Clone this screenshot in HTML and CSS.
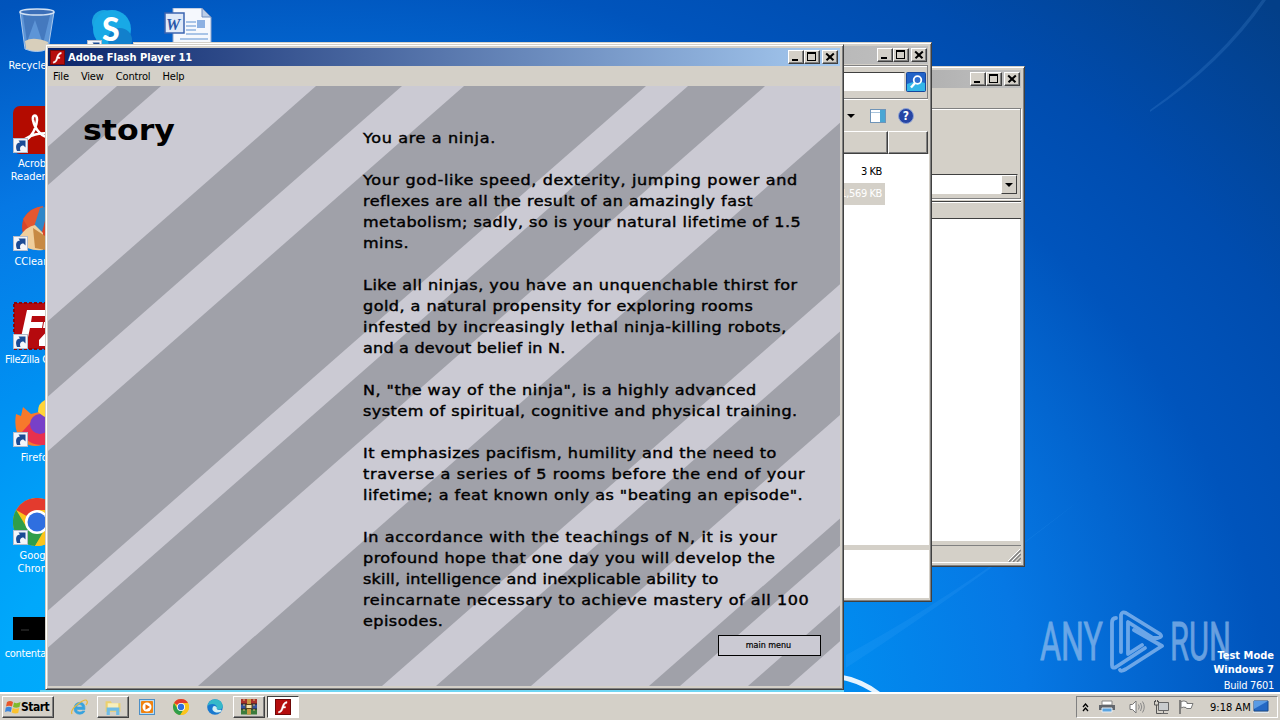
FILE: index.html
```html
<!DOCTYPE html>
<html lang="en">
<head>
    <meta charset="UTF-8">
    <meta name="viewport" content="width=device-width, initial-scale=1.0">
    <title>Desktop</title>
    <link rel="stylesheet" href="styles.css">
</head>
<body>
    <svg width="0" height="0" class="defs">
        <symbol id="shortcut" viewBox="0 0 15 15">
            <rect x=".5" y=".5" width="14" height="14" fill="#f4f6fa" stroke="#b4bccb"/>
            <path d="M4 13C2 8 3.500 4.500 7 4.500L5.500 2.500H12.500V9.500L10.500 7.500C7 7.500 6.500 10 7.500 13Z" fill="#1b4b94"/>
        </symbol>
        <symbol id="flash" viewBox="0 0 16 16">
            <rect x=".5" y=".5" width="15" height="15" fill="#b50d0d" stroke="#6f0808"/>
            <path d="M12 2.500C8.500 3 7.500 6 6.600 9C6 11 5.500 12 3.500 12.500V14C7 13.500 7.700 11 8.300 9H10.500V7.500H8.900C9.500 5.500 10 4.500 12 4.200Z" fill="#fff" stroke="#fff" stroke-width=".4"/>
        </symbol>
        <symbol id="chrome" viewBox="0 0 48 48">
            <circle cx="24" cy="24" r="24" fill="#fbc41c"/>
            <path d="M24 24L3.200 12A24 24 0 0 1 44.800 12Z" fill="#e33b2e"/>
            <path d="M3.200 12A24 24 0 0 0 22 48L33 29L24 24L14 30Z" fill="#2f9e4b"/>
            <path d="M24 12H44.800A24 24 0 0 1 22 48L34 30Z" fill="#fbc41c"/>
            <circle cx="24" cy="24" r="12" fill="#fff"/>
            <circle cx="24" cy="24" r="9.500" fill="#2f6fe0"/>
        </symbol>
    </svg>

    <div class="desktop">
        <svg class="wallpaper" width="1280" height="692" viewBox="0 0 1280 692">
            <path d="M846 655Q930 610 1022 544L1080 500Q980 580 846 668Z" fill="#5cb8ff" opacity=".12"/>
            <path d="M838 674Q862 678 880 692H872Q856 682 838 679Z" fill="#fff" opacity=".9"/>
            <path d="M1150 110Q1220 60 1262 0H1266Q1222 64 1150 112Z" fill="#5c9be0" opacity=".2"/>
            <path d="M40 690H844V692H40Z" fill="#6fd6f4"/>
        </svg>

        <div class="icons">
            <div class="icon">
                <svg width="48" height="48" viewBox="0 0 48 48">
                    <path d="M7 4L12 41Q24 46 35 41L41 4Z" fill="#8fb6e2" opacity=".65"/>
                    <path d="M10 7L14 34L22 12L30 36L37 7Z" fill="#204f9c" opacity=".4"/>
                    <path d="M12 33Q20 28 35 34L34 41Q24 46 13 41Z" fill="#d8cfbb"/>
                    <path d="M7 4L12 41Q24 46 35 41L41 4" fill="none" stroke="#aac8ec"/>
                    <ellipse cx="24" cy="4" rx="17" ry="3" fill="#3c6fb8" stroke="#d3e2f4" stroke-width="1.500"/>
                </svg>
                <span>Recycle Bin</span>
            </div>
            <div class="icon">
                <svg width="48" height="48" viewBox="0 0 48 48">
                    <rect width="48" height="48" rx="7" fill="#b30b00"/>
                    <path d="M10 35C16 34 23 25 24 14C24 8 19 8 20 14C22 24 29 31 37 32C42 32 41 27 35 27C26 27 18 29 12 33C8 36 9 38 13 35" fill="none" stroke="#fff" stroke-width="2.600"/>
                </svg>
                <svg class="arrow" width="15" height="15"><use href="#shortcut"/></svg>
                <span>Acrobat<br>Reader DC</span>
            </div>
            <div class="icon">
                <svg width="48" height="48" viewBox="0 0 48 48">
                    <circle cx="29" cy="23" r="20" fill="#d8452b"/>
                    <path d="M10 15Q18 3 30 2V20L17 27Z" fill="#e4572f"/>
                    <path d="M27 4L36 2L29 28L20 26Z" fill="#2f87c8"/>
                    <path d="M6 33Q14 22 22 21L30 29V46Q16 48 6 38Z" fill="#f0cf9c"/>
                    <path d="M20 24L32 32V46L22 44Z" fill="#c78a44"/>
                </svg>
                <svg class="arrow" width="15" height="15"><use href="#shortcut"/></svg>
                <span>CCleaner</span>
            </div>
            <div class="icon">
                <svg width="48" height="48" viewBox="0 0 48 48">
                    <rect x="1" y="1" width="46" height="46" fill="#b50a0e" stroke="#8c0508" stroke-width="2" stroke-dasharray="3 2"/>
                    <path d="M14 8H34L33 14H19L18 20H30L29 26H17L14 40H7Z" fill="#fff"/>
                    <path d="M31 20H45V26L34 38H44V44H26V38L37 26H30Z" fill="#fff"/>
                </svg>
                <svg class="arrow" width="15" height="15"><use href="#shortcut"/></svg>
                <span class="long">FileZilla Client</span>
            </div>
            <div class="icon">
                <svg width="48" height="48" viewBox="0 0 48 48">
                    <path d="M3 14L8 16L10 7L18 14L26 12L40 12Q48 30 36 42Q22 50 10 42Q0 32 3 14Z" fill="#f7792b"/>
                    <path d="M9 32Q14 46 32 45L42 30L30 14L18 22Z" fill="#e8304e"/>
                    <circle cx="27" cy="24" r="10" fill="#7840c8"/>
                    <path d="M25 12Q25 3 32 0Q44 6 46 22Q34 20 25 12Z" fill="#ffd43a"/>
                </svg>
                <svg class="arrow" width="15" height="15"><use href="#shortcut"/></svg>
                <span>Firefox</span>
            </div>
            <div class="icon">
                <svg width="48" height="48"><use href="#chrome"/></svg>
                <svg class="arrow" width="15" height="15"><use href="#shortcut"/></svg>
                <span>Google<br>Chrome</span>
            </div>
            <div class="icon">
                <svg width="48" height="48" viewBox="0 0 48 48">
                    <rect y="21" width="48" height="23" fill="#000"/>
                    <path d="M8 34H16" stroke="#3a3a3a"/>
                </svg>
                <span class="long">contentarea...</span>
            </div>
            <div class="icon skype">
                <svg width="48" height="48" viewBox="0 0 48 48">
                    <circle cx="16" cy="14" r="12" fill="#1aa3e0"/>
                    <circle cx="24" cy="21" r="19" fill="#18a9e6"/>
                    <circle cx="32" cy="32" r="12" fill="#1280cc"/>
                </svg>
                <b class="skype-s">S</b>
                <svg class="arrow" width="15" height="15"><use href="#shortcut"/></svg>
            </div>
            <div class="icon word">
                <svg width="48" height="48" viewBox="0 0 48 48">
                    <path d="M9 0H38L47 9V48H9Z" fill="#f5f8fd" stroke="#8fa6cc"/>
                    <path d="M38 0V9H47Z" fill="#bccde6" stroke="#6f8cbf"/>
                    <path d="M22 14H32M22 18H32M22 22H32M22 26H44M16 31H44M16 36H44M14 40H44" stroke="#8fb2e0" stroke-width="1.500"/>
                    <rect x="33" y="12" width="8" height="8" fill="#8db1e2"/>
                    <rect x="1" y="5" width="19" height="20" fill="#dfe9f8" stroke="#3b64b0" stroke-width="1.500"/>
                </svg>
                <b class="word-w">W</b>
            </div>
        </div>

        <div class="watermark">
            <svg width="200" height="70" viewBox="0 0 200 70">
                <g fill="#9fc4ee" stroke="#9fc4ee" stroke-width=".8" font-family="Roboto, sans-serif" font-size="53" opacity=".65">
                    <text x="4" y="52" textLength="63" lengthAdjust="spacingAndGlyphs">ANY</text>
                    <text x="134" y="52" textLength="61" lengthAdjust="spacingAndGlyphs">RUN</text>
                </g>
                <g fill="none" stroke="#8fbcf0" stroke-width="3.800" stroke-linecap="round" stroke-linejoin="round" opacity=".75">
                    <path d="M80 10Q76 10 76 15V57Q76 61 80 59L109 40"/>
                    <path d="M85 44V7Q86 3 90 5L124 26Q127 29 122 30H117L92 14V46L106 37"/>
                    <path d="M84 62Q85 64 90 61L126 38L98 22"/>
                </g>
            </svg>
        </div>
        <div class="build">
            <b>Test Mode</b>
            <b>Windows 7</b>
            <span>Build 7601</span>
        </div>

        <div class="window settings">
            <div class="titlebar inactive">
                <div class="buttons"><i class="min"></i><i class="max"></i><i class="close"></i></div>
            </div>
            <div class="panel">
                <div class="combo"><i></i></div>
            </div>
            <div class="list-head"></div>
            <div class="list"></div>
            <div class="status">
                <svg width="13" height="13" viewBox="0 0 13 13"><path d="M1 13L13 1M5 13L13 5M9 13L13 9" stroke="#808080" stroke-width="1.500"/><path d="M0 12L12 0M4 12L12 4" stroke="#fff"/></svg>
            </div>
        </div>

        <div class="window explorer">
            <div class="titlebar inactive">
                <div class="buttons"><i class="min"></i><i class="max"></i><i class="close"></i></div>
            </div>
            <div class="searchbar">
                <div class="search"></div>
                <svg width="20" height="20" viewBox="0 0 20 20">
                    <rect x=".5" y=".5" width="19" height="19" rx="1" fill="#2263c8" stroke="#16469c"/>
                    <path d="M1 12Q10 8 19 11V19H1Z" fill="#33b5e8"/>
                    <circle cx="11.500" cy="8" r="3.800" fill="#2f6fd0" stroke="#fff" stroke-width="1.800"/>
                    <path d="M9 11L5 15.500" stroke="#fff" stroke-width="2.400"/>
                </svg>
            </div>
            <div class="toolbar">
                <i class="down"></i>
                <svg width="16" height="14" viewBox="0 0 16 14">
                    <rect x=".5" y=".5" width="15" height="13" fill="#fff" stroke="#6f94b8"/>
                    <path d="M1 3.500H15" stroke="#a8c4dc"/>
                    <rect x="10" y="1" width="5" height="12" fill="#49a6d4"/>
                </svg>
                <div class="help">?</div>
            </div>
            <div class="columns"><div></div><div></div></div>
            <div class="files">
                <div class="file">3 KB</div>
                <div class="file selected">1,569 KB</div>
            </div>
            <div class="details"></div>
        </div>

        <div class="window player">
            <div class="titlebar">
                <svg width="15" height="15"><use href="#flash"/></svg>
                <span>Adobe Flash Player 11</span>
                <div class="buttons"><i class="min"></i><i class="max"></i><i class="close"></i></div>
            </div>
            <div class="menu">
                <span>File</span><span>View</span><span>Control</span><span>Help</span>
            </div>
            <div class="stage">
                <svg class="stripes" width="792" height="600" viewBox="0 0 792 600">
                    <g fill="#a0a1a9">
                        <path d="M69 0H113L-571 600H-615Z"/>
                        <path d="M268 0H354L-330 600H-416Z"/>
                        <path d="M416 0H598L-86 600H-268Z"/>
                        <path d="M640 0H717L33 600H-44Z"/>
                        <path d="M834 0H1018L334 600H150Z"/>
                        <path d="M1072 0H1167L483 600H388Z"/>
                        <path d="M1285 0H1316L632 600H601Z"/>
                        <path d="M1384 0H1425L741 600H700Z"/>
                    </g>
                </svg>
                <h1>story</h1>
                <div class="story">
                    <p><span class="wide">You are a ninja.</span></p>
                    <p><span class="wide">Your god-like speed, dexterity, jumping power and</span><br>
                    reflexes are all the result of an amazingly fast<br>
                    metabolism; sadly, so is your natural lifetime of 1.5<br>
                    mins.</p>
                    <p>Like all ninjas, you have an unquenchable thirst for<br>
                    gold, a natural propensity for exploring rooms<br>
                    infested by increasingly lethal ninja-killing robots,<br>
                    <span class="tight">and a devout belief in N.</span></p>
                    <p>N, "the way of the ninja", is a highly advanced<br>
                    system of spiritual, cognitive and physical training.</p>
                    <p>It emphasizes pacifism, humility and the need to<br>
                    <span class="wide">traverse a series of 5 rooms before the end of your</span><br>
                    lifetime; a feat known only as "beating an episode".</p>
                    <p><span class="wide">In accordance with the teachings of N, it is your</span><br>
                    profound hope that one day you will develop the<br>
                    <span class="tight">skill, intelligence and inexplicable ability to</span><br>
                    <span class="mid">reincarnate necessary to achieve mastery of all 100</span><br>
                    episodes.</p>
                </div>
                <button class="main-menu">main menu</button>
            </div>
        </div>
    </div>

    <div class="taskbar">
        <div class="start">
            <svg width="16" height="16" viewBox="0 0 16 16">
                <path d="M2 3Q5 1 8 3L7 7.500Q4 6 1 7.500Z" fill="#e8562a"/>
                <path d="M9 3.500Q12 5 15.500 3L14.500 8Q11 9.500 8 8Z" fill="#7fba2c"/>
                <path d="M.8 8.500Q4 7 6.800 8.500L5.800 13Q3 11.500 0 13Z" fill="#3c86dc"/>
                <path d="M7.700 9Q11 10.500 14.200 9L13.200 14Q10 15 6.700 13.500Z" fill="#fbc22e"/>
            </svg>
            <b>Start</b>
        </div>
        <div class="task">
            <svg width="17" height="17" viewBox="0 0 17 17">
                <path d="M14 10.500H5.500Q6 13 8.800 13Q10.500 13 11.500 12H14Q12.500 15.300 8.800 15.300Q3 15 3 9.300Q3.500 3.500 8.800 3.300Q14.500 3.500 14 10.500ZM5.600 8H11.500Q11 5.600 8.600 5.600Q6.200 5.600 5.600 8Z" fill="#38a3de" stroke="#38a3de" stroke-width=".6"/>
                <path d="M1 15Q-1 11 7 5T16 2Q17 4 15 6" fill="none" stroke="#e8b83a" stroke-width="1.200"/>
            </svg>
        </div>
        <div class="task open">
            <svg width="18" height="17" viewBox="0 0 16 16">
                <path d="M1 2H6L7 4H15V12H1Z" fill="#ecd06c"/>
                <path d="M3 4H13V9H3Z" fill="#f8efbc"/>
                <path d="M2 8H14V15H11V11H5V15H2Z" fill="#6fbce6"/>
            </svg>
        </div>
        <div class="task">
            <svg width="16" height="16" viewBox="0 0 16 16">
                <rect x=".5" y=".5" width="15" height="15" fill="#b9dcf4" stroke="#4c8fc6"/>
                <rect x="2" y="2" width="12" height="12" rx="1" fill="#f0820f"/>
                <circle cx="8" cy="8" r="4.500" fill="#fff"/>
                <path d="M6.500 5.200L11 8L6.500 10.800Z" fill="#e86c08"/>
            </svg>
        </div>
        <div class="task"><svg width="16" height="16"><use href="#chrome"/></svg></div>
        <div class="task">
            <svg width="16" height="16" viewBox="0 0 16 16">
                <circle cx="8" cy="8" r="7.800" fill="#1879cf"/>
                <path d="M.5 7Q2 0 8.500 .2Q15 .8 15.800 7Q15.500 10.500 11.500 10.500Q9 10.500 9.800 8.500Q9.500 5 5.500 5Q2 5 .5 7Z" fill="#35b9c9"/>
                <path d="M6 7.500Q4 12 9 13.500Q12 14 15 12L13.500 10.800Q9 11.500 9.800 8.500Q8.500 6 6 7.500Z" fill="#d4f0f4"/>
            </svg>
        </div>
        <div class="task open">
            <svg width="18" height="16" viewBox="0 0 18 16">
                <rect x="1" width="16" height="5" fill="#a8312c"/>
                <rect x="1" y="5" width="16" height="5" fill="#35549f"/>
                <rect x="1" y="10" width="16" height="5.500" fill="#3b7c3c"/>
                <path d="M1 5H17M1 10H17" stroke="#222"/>
                <rect x="7" width="4" height="15.500" fill="#c79a43"/>
                <path d="M6 5.500H12V9.500H6Z" fill="#f4e6b4" stroke="#5a4418"/>
                <path d="M4 0V15M14 0V15" stroke="#e0c070" stroke-dasharray="2 3"/>
            </svg>
        </div>
        <div class="task active"><svg width="16" height="16"><use href="#flash"/></svg></div>

        <div class="tray">
            <svg class="chevrons" width="7" height="9" viewBox="0 0 7 9"><path d="M1 4L3.500 1L6 4M1 8L3.500 5L6 8" fill="none" stroke="#000" stroke-width="1.300"/></svg>
            <svg width="16" height="14" viewBox="0 0 16 14">
                <path d="M3 1H13V5H3Z" fill="#fff" stroke="#888"/>
                <path d="M0 5H16V10H0Z" fill="#62666c"/>
                <path d="M3 8H13V12H3Z" fill="#5aa4e0" stroke="#e8eef4"/>
            </svg>
            <svg class="speaker" width="16" height="16" viewBox="0 0 16 16">
                <path d="M1 5.500H3.500L7 2V14L3.500 10.500H1Z" fill="#fff" stroke="#777"/>
                <path d="M9.500 5.500Q11 8 9.500 10.500M11.500 4Q14 8 11.500 12M13.500 2.500Q17 8 13.500 13.500" fill="none" stroke="#888"/>
            </svg>
            <svg width="17" height="16" viewBox="0 0 17 16">
                <path d="M5.500 3.500H15.500V11.500H5.500Z" fill="#c9ccce" stroke="#666"/>
                <path d="M7 14.500H15M10.500 12V14" stroke="#666"/>
                <path d="M1.500 2V6H5.500V2M3.500 6V14.500H8M2.500 1V3M4.500 1V3" fill="none" stroke="#555"/>
            </svg>
            <svg width="16" height="16" viewBox="0 0 16 16">
                <path d="M2 1V15" stroke="#666" stroke-width="1.500"/>
                <path d="M3 2.500Q6 1 9 3V4.500H15L13 9.500H8.500L8 8.500Q5 7.500 3 9Z" fill="#fff" stroke="#777"/>
            </svg>
            <span class="clock">9:18 AM</span>
            <svg width="16" height="14" viewBox="0 0 16 14">
                <path d="M1 1H15V11H1Z" fill="#2468c4" stroke="#174a8c"/>
                <path d="M1 1H15L1 9Z" fill="#5a9be4"/>
                <path d="M0 12.500H16" stroke="#dfe8f0"/>
            </svg>
        </div>
    </div>
</body>
</html>
```
FILE: styles.css
```css
body {
    margin: 0;
    width: 1280px;
    height: 720px;
    overflow: hidden;
    display: flex;
    flex-direction: column;
    font-family: "DejaVu Sans Condensed", "DejaVu Sans", sans-serif;
    font-size: 11px;
    color: #000;
}

svg {
    display: block;
    flex: none;
}

.defs {
    position: absolute;
}

.desktop {
    position: relative;
    height: 692px;
    overflow: hidden;
    background: radial-gradient(1100px 850px at 300px 720px, #00b4ff 0%, #00a8fb 28%, #0090f2 46%, #0678e4 66%, #0054bc 88%, #004cae 101%, #033f88 122%);
}

.wallpaper {
    position: absolute;
    top: 0;
    left: 0;
}

/* desktop icons */
.icons {
    display: grid;
    grid-template-rows: repeat(7, 98px);
    grid-template-columns: 74px 76px 75px;
    grid-auto-flow: column;
    padding-top: 8px;
}

.icon {
    position: relative;
    display: flex;
    flex-direction: column;
    align-items: center;
    text-align: center;
    color: #fff;
    line-height: 13px;
}

.icon span {
    margin-top: 3px;
    white-space: nowrap;
}

.icon .long {
    letter-spacing: -0.35px;
}

.icon .arrow {
    position: absolute;
    left: 13px;
    top: 32px;
}

.skype {
    grid-column: 2;
    grid-row: 1;
}

.word {
    grid-column: 3;
    grid-row: 1;
}

.skype-s {
    position: absolute;
    top: 12px;
    left: 28px;
    font-family: Lato, sans-serif;
    font-size: 32px;
    font-weight: 900;
    line-height: 18px;
}

.word-w {
    position: absolute;
    top: 10px;
    left: 16px;
    font: italic bold 16px/14px "Liberation Serif", serif;
    color: #2b57a8;
}

.watermark {
    position: absolute;
    left: 1036px;
    top: 608px;
}

.build {
    position: absolute;
    right: 6px;
    top: 649px;
    display: flex;
    flex-direction: column;
    text-align: right;
    color: #fff;
    line-height: 14px;
}

.build span {
    margin-top: 2px;
    letter-spacing: -0.3px;
}

/* classic windows */
.window {
    position: absolute;
    box-sizing: border-box;
    background: #d4d0c8;
    border: 1px solid;
    border-color: #d4d0c8 #404040 #404040 #d4d0c8;
    box-shadow: inset 1px 1px #fff, inset -1px -1px #808080;
    display: flex;
    flex-direction: column;
    padding: 3px 3px 3px 2px;
}

.titlebar {
    height: 18px;
    box-sizing: border-box;
    flex: none;
    display: flex;
    align-items: center;
    padding: 0 2px 0 2px;
    background: linear-gradient(to right, #0a246a, #a6caf0);
    color: #fff;
    font-weight: bold;
}

.titlebar span {
    margin-left: 3px;
}

.inactive {
    padding-right: 1px;
    background: linear-gradient(to right, #808080, #c0c0c0);
}

.buttons {
    margin-left: auto;
    display: flex;
}

.buttons i {
    position: relative;
    width: 16px;
    height: 14px;
    box-sizing: border-box;
    background: #d4d0c8;
    border: 1px solid;
    border-color: #fff #404040 #404040 #fff;
    box-shadow: inset -1px -1px #808080;
}

.buttons .close {
    margin-left: 2px;
}

.min::before {
    content: "";
    position: absolute;
    left: 3px;
    bottom: 2px;
    width: 6px;
    height: 2px;
    background: #000;
}

.max::before {
    content: "";
    position: absolute;
    left: 2px;
    top: 1px;
    width: 7px;
    height: 6px;
    border: 1px solid #000;
    border-top-width: 2px;
}

.close::before,
.close::after {
    content: "";
    position: absolute;
    left: 2px;
    top: 5px;
    width: 10px;
    height: 1.5px;
    background: #000;
    transform: rotate(43deg);
}

.close::after {
    transform: rotate(-43deg);
}

/* flash player */
.player {
    left: 45px;
    top: 44px;
    width: 799px;
    height: 646px;
}

.menu {
    height: 20px;
    flex: none;
    display: flex;
    align-items: center;
    gap: 12px;
    padding-left: 5px;
    letter-spacing: -0.15px;
}

.stage {
    position: relative;
    width: 792px;
    height: 600px;
    background: #cbcad3;
    overflow: hidden;
    font-family: "DejaVu Sans", sans-serif;
}

.stripes {
    position: absolute;
    top: 0;
    left: 0;
}

.stage h1 {
    position: absolute;
    left: 35px;
    top: 26px;
    margin: 0;
    font-size: 29px;
    line-height: 36px;
    font-weight: bold;
    transform: scaleX(1.09);
    transform-origin: left;
}

.story {
    position: relative;
    margin: 42px 0 0 315px;
    font-size: 14px;
    line-height: 21px;
    letter-spacing: 0.4px;
    white-space: nowrap;
    -webkit-text-stroke: 0.4px #000;
    transform: scaleX(1.145);
    transform-origin: left;
}

.story p {
    margin: 0 0 21px;
}

.wide {
    letter-spacing: 0.55px;
}

.mid {
    letter-spacing: 0.48px;
}

.tight {
    letter-spacing: 0.18px;
}

.main-menu {
    position: absolute;
    left: 670px;
    top: 549px;
    width: 103px;
    height: 21px;
    padding: 0 2px 0 0;
    border: 1px solid #000;
    background: #cbcad3;
    font-family: "DejaVu Sans", sans-serif;
    font-size: 8px;
    color: #000;
    -webkit-text-stroke: 0.2px #000;
}

/* explorer behind the player */
.explorer {
    left: 133px;
    top: 42px;
    width: 799px;
    height: 560px;
}

.searchbar {
    height: 34px;
    box-sizing: border-box;
    flex: none;
    display: flex;
    align-items: center;
    gap: 1px;
    padding-right: 1px;
    margin-top: 1px;
    border: 1px solid #808080;
    box-shadow: inset 0 1px #fff, 0 1px #fff;
}

.search {
    flex: 1;
    height: 18px;
    background: #fff;
    border: 1px solid;
    border-color: #404040 #d4d0c8 #d4d0c8 #404040;
}

.toolbar {
    height: 34px;
    margin-bottom: -2px;
    flex: none;
    display: flex;
    align-items: center;
    justify-content: flex-end;
    padding-right: 14px;
}

.down {
    border: 4px solid transparent;
    border-top-color: #000;
    border-bottom: 0;
    margin-right: 15px;
}

.help {
    margin-left: 12px;
    width: 14px;
    height: 14px;
    border: 1px solid #8fa4d4;
    border-radius: 50%;
    background: #2645a4;
    color: #fff;
    font-weight: bold;
    font-size: 12px;
    line-height: 14px;
    text-align: center;
}

.columns {
    height: 23px;
    flex: none;
    display: flex;
    justify-content: flex-end;
}

.columns div {
    width: 40px;
    box-sizing: border-box;
    border: 1px solid;
    border-color: #fff #404040 #404040 #fff;
    box-shadow: inset -1px -1px #808080;
}

.columns div:first-child {
    flex: 1;
}

.files {
    height: 384px;
    flex: none;
    background: #fff;
    padding-top: 7px;
    margin-right: -1px;
}

.file {
    height: 22px;
    line-height: 22px;
    text-align: right;
    margin-right: 44px;
    padding-right: 3px;
    letter-spacing: -0.4px;
}

.selected {
    background: #d4d0c8;
    color: #fff;
}

.details {
    flex: 1;
    margin: 5px -1px 0 0;
    background: #fff;
}

/* dialog at the back */
.settings {
    left: 620px;
    top: 66px;
    width: 405px;
    height: 501px;
}

.panel {
    height: 91px;
    box-sizing: border-box;
    flex: none;
    margin-top: 20px;
    border: 1px solid #808080;
    box-shadow: inset 0 1px #fff, 1px 1px #fff;
    display: flex;
    align-items: flex-end;
    padding: 0 2px 3px;
}

.combo {
    flex: 1;
    height: 19px;
    background: #fff;
    border: 1px solid;
    border-color: #404040 #d4d0c8 #d4d0c8 #404040;
    display: flex;
    justify-content: flex-end;
}

.combo i {
    position: relative;
    width: 14px;
    background: #d4d0c8;
    border: 1px solid;
    border-color: #fff #404040 #404040 #fff;
}

.combo i::before {
    content: "";
    position: absolute;
    left: 3px;
    top: 7px;
    border: 4px solid transparent;
    border-top-color: #000;
    border-bottom: 0;
}

.list-head {
    height: 16px;
    flex: none;
    margin-top: 2px;
    border-top: 1px solid #404040;
    border-bottom: 1px solid #404040;
    box-shadow: inset 0 1px #fff;
}

.list {
    height: 322px;
    flex: none;
    background: #fff;
    border-right: 1px solid #d4d0c8;
}

.status {
    flex: 1;
    margin-top: 4px;
    border-top: 1px solid #808080;
    border-bottom: 1px solid #fff;
    display: flex;
    justify-content: flex-end;
    align-items: flex-end;
}

/* taskbar */
.taskbar {
    height: 28px;
    box-sizing: border-box;
    display: flex;
    align-items: center;
    padding: 3px 2px 1px;
    background: #d4d0c8;
    box-shadow: inset 0 2px #fff;
}

.start {
    display: flex;
    align-items: center;
    width: 52px;
    height: 22px;
    box-sizing: border-box;
    padding-left: 2px;
    border: 1px solid;
    border-color: #fff #404040 #404040 #fff;
    box-shadow: inset -1px -1px #808080;
    margin-right: 9px;
}

.start b {
    font-size: 12px;
    letter-spacing: -0.5px;
}

.task {
    width: 32px;
    height: 22px;
    box-sizing: border-box;
    margin-right: 2px;
    display: flex;
    align-items: center;
    justify-content: center;
}

.open {
    border: 1px solid;
    border-color: #fff #404040 #404040 #fff;
    box-shadow: inset -1px -1px #808080;
}

.active {
    background: #fff;
    border: 1px solid;
    border-color: #404040 #fff #fff #404040;
}

.tray {
    margin-left: auto;
    width: 202px;
    height: 22px;
    box-sizing: border-box;
    border: 1px solid;
    border-color: #808080 #fff #fff #808080;
    display: flex;
    align-items: center;
    padding-left: 5px;
}

.tray svg {
    margin-right: 8px;
}

.tray .chevrons {
    margin-right: 10px;
}

.tray .speaker {
    margin-left: 6px;
}

.clock {
    width: 51px;
    margin-left: 8px;
}
```
